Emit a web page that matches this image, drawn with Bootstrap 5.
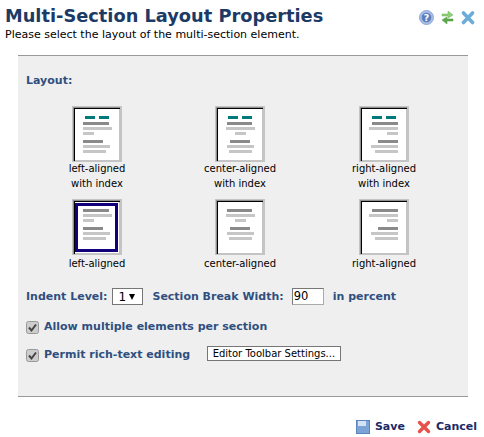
<!DOCTYPE html>
<html><head><meta charset="utf-8">
<link href="https://cdn.jsdelivr.net/npm/bootstrap@5.3.0/dist/css/bootstrap.min.css" rel="stylesheet">
<style>
html,body{background:#fff;}
body{font-family:"DejaVu Sans",Verdana,sans-serif;font-size:11px;color:#000;width:484px;height:437px;overflow:hidden;}
.hdr-wrap{padding:4px 9px 0 5px;height:55px;}
.ttl{font-size:17.8px;font-weight:700;color:#1c3a66;line-height:24px;margin:0;white-space:nowrap;}
.sub{font-size:11px;line-height:14px;}
.ico-bar{gap:7px;padding:6px 0 0 0;}
.pane{margin:0 16px 0 18px;height:342px;background:#efefef;border-top:1px solid #999;border-bottom:1px solid #999;padding:18px 0 0 8px;}
.lbl{color:#2f4f7f;font-weight:700;font-size:11px;line-height:14px;}
.grid-t{display:grid;grid-template-columns:144px 142px 146px;grid-template-rows:93px 81px;margin:18px 0 0 -1px;}
.cell-t{text-align:center;font-size:10px;line-height:15px;}
.th{display:block;width:50px;height:56px;margin:0 auto -1px;}
.th-low{margin-bottom:1px;}
.ln{font-size:11px;line-height:14px;color:#2f4f7f;font-weight:700;white-space:nowrap;}
.row-a{margin-top:8px;}
.row-b{margin-top:15px;}
.row-c{margin-top:14px;}
.sel-b{width:31px;height:17px;border:1px solid #767676;background:#fff;color:#000;font-weight:400;font-size:12px;padding:0 7px 0 5px;margin-left:5px;display:flex;align-items:center;justify-content:space-between;}
.tri{width:0;height:0;border-left:3px solid transparent;border-right:3px solid transparent;border-top:6px solid #000;}
.gap-s{margin-left:9px;}
.inp-b{width:32px;height:17px;margin-left:8px;border:1px solid #aaa;border-top-color:#777;border-left-color:#777;background:#fff;color:#000;font-weight:400;font-size:11.5px;padding-left:1px;line-height:15px;}
.chk{width:13px;height:13px;margin-right:5px;}
.btn-s{font-size:10px;line-height:13px;padding:0 4.500px;height:15px;margin:-3px 0 0 17px;border:1px solid #767676;background:#fff;color:#000;border-radius:0;font-family:inherit;}
.foot{gap:12px;padding:22px 7px 0 0;}
.foot-a{color:#1c2a66;font-weight:700;font-size:11px;text-decoration:none;gap:5px;}
</style></head><body>
<div class="d-flex justify-content-between hdr-wrap">
<div><h1 class="ttl">Multi-Section Layout Properties</h1><div class="sub">Please select the layout of the multi-section element.</div></div>
<div class="d-flex align-items-start ico-bar">
<svg width="15" height="15" viewBox="0 0 15 15"><circle cx="7.500" cy="7.500" r="7" fill="#a9bde6" stroke="#8fa8d8"/><circle cx="7.500" cy="7.500" r="4.800" fill="#5d7fbe"/><text x="7.500" y="11" text-anchor="middle" font-size="9.500" font-weight="700" fill="#fff" font-family="DejaVu Sans">?</text></svg>
<svg width="13" height="15" viewBox="0 0 13 15"><path d="M1 6V4h6V1l5 4-5 3V6z" fill="#8fcf7a" stroke="#6fb05c" stroke-width=".5"/><path d="M12 9v2H6v3L1 10l5-3v2z" fill="#5da84c" stroke="#4f9640" stroke-width=".5"/></svg>
<svg width="14" height="15" viewBox="0 0 14 15"><path d="M2.500 3l9 9.500M11.500 3l-9 9.500" stroke="#6cacd8" stroke-width="3.600" stroke-linecap="round"/></svg>
</div></div>
<div class="pane">
<div class="lbl">Layout:</div>
<div class="grid-t">
<div class="cell-t"><svg class="th" viewBox="0 0 50 56"><use href="#fr"/><path fill="#007a7a" d="M13 10h10v3H13zM27 10h10v3H27z"/><path fill="#8a8a8a" d="M11 16h26v3H11zM11 34h20v3H11z"/><path fill="#c6c6c6" d="M11 21h29v3H11zM11 26h11v3H11zM11 39h27v3H11zM11 44h23v3H11z"/></svg>left-aligned<br>with index</div>
<div class="cell-t"><svg class="th" viewBox="0 0 50 56"><use href="#fr"/><path fill="#007a7a" d="M13 10h10v3H13zM27 10h10v3H27z"/><path fill="#8a8a8a" d="M12 16h25v3H12zM15 34h20v3H15z"/><path fill="#c6c6c6" d="M11 21h29v3H11zM20 26h11v3H20zM12 39h27v3H12zM14 44h23v3H14z"/></svg>center-aligned<br>with index</div>
<div class="cell-t"><svg class="th" viewBox="0 0 50 56"><use href="#fr"/><path fill="#007a7a" d="M13 10h10v3H13zM27 10h10v3H27z"/><path fill="#8a8a8a" d="M13 16h26v3H13zM19 34h20v3H19z"/><path fill="#c6c6c6" d="M10 21h29v3H10zM28 26h11v3H28zM12 39h27v3H12zM16 44h23v3H16z"/></svg>right-aligned<br>with index</div>
<div class="cell-t"><svg class="th th-low" viewBox="0 0 50 56"><use href="#fr"/><path fill="none" stroke="#12007a" stroke-width="3" d="M4.500 5.500h40v46h-40z"/><path fill="#8a8a8a" d="M11 10h26v3H11zM11 28h20v3H11z"/><path fill="#c6c6c6" d="M11 15h29v3H11zM11 20h11v3H11zM11 33h27v3H11zM11 38h23v3H11z"/></svg>left-aligned</div>
<div class="cell-t"><svg class="th th-low" viewBox="0 0 50 56"><use href="#fr"/><path fill="#8a8a8a" d="M12 10h25v3H12zM15 28h20v3H15z"/><path fill="#c6c6c6" d="M11 15h29v3H11zM20 20h11v3H20zM12 33h27v3H12zM14 38h23v3H14z"/></svg>center-aligned</div>
<div class="cell-t"><svg class="th th-low" viewBox="0 0 50 56"><use href="#fr"/><path fill="#8a8a8a" d="M13 10h26v3H13zM19 28h20v3H19z"/><path fill="#c6c6c6" d="M10 15h29v3H10zM28 20h11v3H28zM12 33h27v3H12zM16 38h23v3H16z"/></svg>right-aligned</div>
</div>
<div class="d-flex align-items-center ln row-a">Indent Level:<span class="sel-b"><span>1</span><span class="tri"></span></span><span class="gap-s">Section Break Width:</span><span class="inp-b">90</span><span class="gap-s">in percent</span></div>
<div class="d-flex align-items-center ln row-b"><svg class="chk" viewBox="0 0 13 13"><use href="#ck"/></svg>Allow multiple elements per section</div>
<div class="d-flex align-items-center ln row-c"><svg class="chk" viewBox="0 0 13 13"><use href="#ck"/></svg>Permit rich-text editing<button class="btn-s">Editor Toolbar Settings...</button></div>
</div>
<div class="d-flex justify-content-end foot">
<a class="d-flex align-items-center foot-a" href="#"><svg width="14" height="14" viewBox="0 0 14 14"><rect x=".5" y=".5" width="13" height="13" fill="#7ba3d6" stroke="#5a86bd"/><rect x="2" y="1" width="8" height="5" fill="#d5e4f4"/></svg>Save</a>
<a class="d-flex align-items-center foot-a" href="#"><svg width="14" height="14" viewBox="0 0 14 14"><path d="M2.500 2.500l9 9M11.500 2.500l-9 9" stroke="#e8504a" stroke-width="3.400" stroke-linecap="round"/></svg>Cancel</a>
</div>
<svg width="0" height="0" class="d-block"><defs>
<g id="fr"><rect width="50" height="56" fill="#c4c4c4"/><rect x="1" y="1" width="47" height="54" fill="#8f8f8f"/><rect x="2" y="2" width="46" height="53" fill="#000"/><rect x="3" y="3" width="45" height="52" fill="#c4c4c4"/><rect x="3" y="3" width="44" height="51" fill="#fff"/></g>
<g id="ck"><rect x=".5" y=".5" width="12" height="12" rx="2" fill="#cdcdcd" stroke="#999"/><path d="M3 6.500l2.500 3 4.500-6" fill="none" stroke="#444" stroke-width="2"/></g>
</defs></svg>
</body></html>
